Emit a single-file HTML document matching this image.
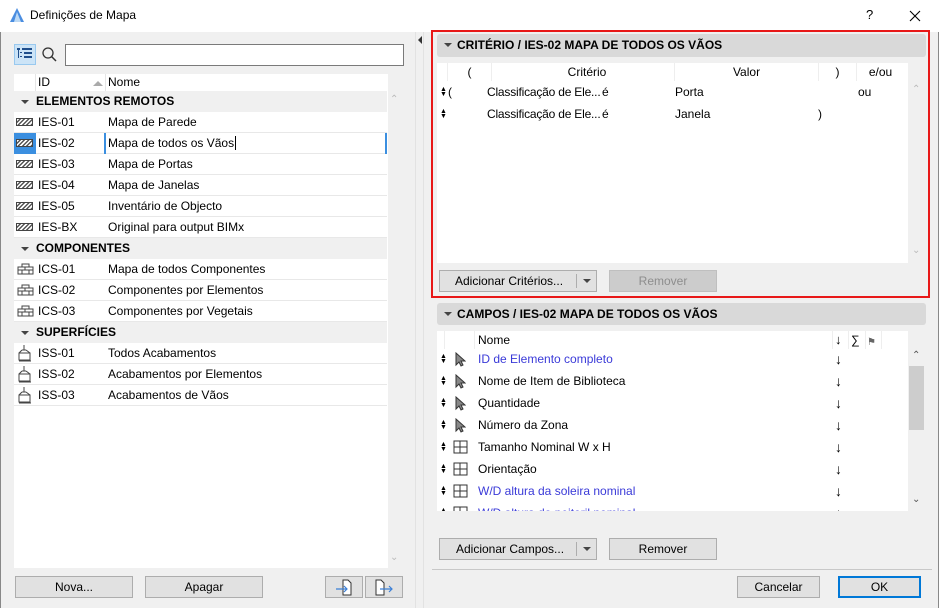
<!DOCTYPE html>
<html><head><meta charset="utf-8"><style>
*{box-sizing:border-box;margin:0;padding:0}
body{width:939px;height:608px;overflow:hidden;background:#f0f0f0;font:12px "Liberation Sans",sans-serif;color:#000;position:relative}
.a{position:absolute}
.btn{position:absolute;background:#e1e1e1;border:1px solid #adadad;text-align:center;line-height:20px;font-size:12px}
.hdr{position:absolute;background:#d9d9d9;border-radius:3px;font-weight:bold;font-size:12px;line-height:22px;padding-left:20px}
.tri{position:absolute;left:7px;top:9px;width:0;height:0;border-left:4px solid transparent;border-right:4px solid transparent;border-top:4px solid #444}
.row{position:absolute;left:14px;width:373px;height:21px;border-bottom:1px solid #e8e8e8;line-height:20px;background:#fff}
.grp{position:absolute;left:14px;width:373px;height:21px;background:#f0f0f0;font-weight:bold;line-height:21px;padding-left:22px}
.grp .tri{left:7px;top:9px}
.id{position:absolute;left:24px}
.nm{position:absolute;left:94px}
.ic{position:absolute;left:2px;top:6px;width:17px;height:8px;border:1px solid #444;background:repeating-linear-gradient(135deg,#fff 0 1.5px,#555 1.5px 3px)}
.fr{position:absolute;left:0;width:471px;height:22px;line-height:22px}
.ud{position:absolute;left:3px;font-size:7px;line-height:5px;top:6px}
.blue{color:#3a3ad8}
</style></head><body>
<!-- title bar -->
<div class="a" style="left:0;top:0;width:939px;height:32px;background:#fff"></div>
<svg class="a" style="left:9px;top:7px" width="16" height="16"><path d="M1 15 L8 1 L15 15 Z" fill="#4a8de0"/><path d="M5 15 L8 5 L12 15Z" fill="#bcd9f5"/></svg>
<div class="a" style="left:30px;top:8px;font-size:12px">Definições de Mapa</div>
<div class="a" style="left:866px;top:7px;font-size:13px">?</div>
<svg class="a" style="left:909px;top:10px" width="12" height="12"><path d="M1 1L11 11M11 1L1 11" stroke="#000" stroke-width="1.1"/></svg>
<div class="a" style="left:0;top:32px;width:1px;height:576px;background:#888"></div>
<div class="a" style="left:938px;top:32px;width:1px;height:576px;background:#888"></div>

<!-- left toolbar -->
<div class="a" style="left:14px;top:44px;width:22px;height:21px;background:#cce4f7;border:1px solid #99c9ef"></div>
<svg class="a" style="left:17px;top:47px" width="16" height="14"><g fill="#1f4e8c"><rect x="0" y="1" width="3" height="2"/><rect x="5" y="1" width="10" height="2"/><rect x="3" y="5" width="2" height="1"/><rect x="7" y="5" width="8" height="2"/><rect x="3" y="9" width="2" height="1"/><rect x="7" y="9" width="8" height="2"/><rect x="1" y="3" width="1" height="8"/></g></svg>
<svg class="a" style="left:41px;top:46px" width="16" height="16"><circle cx="7" cy="7" r="5" fill="none" stroke="#333" stroke-width="1.3"/><path d="M10.5 10.5 L15 15" stroke="#333" stroke-width="1.5"/></svg>
<div class="a" style="left:65px;top:44px;width:339px;height:22px;background:#fff;border:1px solid #7a7a7a"></div>

<!-- list -->
<div class="a" style="left:14px;top:74px;width:374px;height:494px;background:#fff"></div>
<div class="a" style="left:14px;top:74px;width:374px;height:17px;background:#fff;line-height:17px">
 <div class="a" style="left:21px;top:0;width:1px;height:17px;background:#e5e5e5"></div>
 <div class="a" style="left:24px">ID</div>
 <div class="a" style="left:79px;top:7px;width:0;height:0;border-left:5px solid transparent;border-right:5px solid transparent;border-bottom:5px solid #aaa"></div>
 <div class="a" style="left:91px;top:0;width:1px;height:17px;background:#e5e5e5"></div>
 <div class="a" style="left:94px">Nome</div>
</div>
<div class="grp" style="top:91px"><div class="tri"></div>ELEMENTOS REMOTOS</div>
<div class="row" style="top:112px"><div class="ic"></div><div class="id">IES-01</div><div class="nm">Mapa de Parede</div></div>
<div class="row" style="top:133px"><div class="a" style="left:0;top:0;width:22px;height:21px;background:#3b8fe0"></div><div class="ic"></div><div class="id">IES-02</div><div class="a" style="left:90px;top:0;width:283px;height:21px;border-left:2px solid #3b8fe0;border-right:2px solid #3b8fe0"></div><div class="nm">Mapa de todos os Vãos<span style="border-left:1px solid #000;margin-left:1px"></span></div></div>
<div class="row" style="top:154px"><div class="ic"></div><div class="id">IES-03</div><div class="nm">Mapa de Portas</div></div>
<div class="row" style="top:175px"><div class="ic"></div><div class="id">IES-04</div><div class="nm">Mapa de Janelas</div></div>
<div class="row" style="top:196px"><div class="ic"></div><div class="id">IES-05</div><div class="nm">Inventário de Objecto</div></div>
<div class="row" style="top:217px"><div class="ic"></div><div class="id">IES-BX</div><div class="nm">Original para output BIMx</div></div>
<div class="grp" style="top:238px"><div class="tri"></div>COMPONENTES</div>
<div class="row" style="top:259px"><svg class="a" style="left:3px;top:4px" width="17" height="12"><path d="M5 1H12V4H5ZM1 4H16V7H1ZM1 7H16V11H1ZM8 4V7M5 7V11M12 7V11" fill="none" stroke="#444"/></svg><div class="id">ICS-01</div><div class="nm">Mapa de todos Componentes</div></div>
<div class="row" style="top:280px"><svg class="a" style="left:3px;top:4px" width="17" height="12"><path d="M5 1H12V4H5ZM1 4H16V7H1ZM1 7H16V11H1ZM8 4V7M5 7V11M12 7V11" fill="none" stroke="#444"/></svg><div class="id">ICS-02</div><div class="nm">Componentes por Elementos</div></div>
<div class="row" style="top:301px"><svg class="a" style="left:3px;top:4px" width="17" height="12"><path d="M5 1H12V4H5ZM1 4H16V7H1ZM1 7H16V11H1ZM8 4V7M5 7V11M12 7V11" fill="none" stroke="#444"/></svg><div class="id">ICS-03</div><div class="nm">Componentes por Vegetais</div></div>
<div class="grp" style="top:322px"><div class="tri"></div>SUPERFÍCIES</div>
<div class="row" style="top:343px"><svg class="a" style="left:3px;top:1px" width="16" height="19"><path d="M7 1V6M5 6H9M2 9H13V16H2ZM2 9L5 6M13 9L9 6M2 17H14" fill="none" stroke="#444"/></svg><div class="id">ISS-01</div><div class="nm">Todos Acabamentos</div></div>
<div class="row" style="top:364px"><svg class="a" style="left:3px;top:1px" width="16" height="19"><path d="M7 1V6M5 6H9M2 9H13V16H2ZM2 9L5 6M13 9L9 6M2 17H14" fill="none" stroke="#444"/></svg><div class="id">ISS-02</div><div class="nm">Acabamentos por Elementos</div></div>
<div class="row" style="top:385px"><svg class="a" style="left:3px;top:1px" width="16" height="19"><path d="M7 1V6M5 6H9M2 9H13V16H2ZM2 9L5 6M13 9L9 6M2 17H14" fill="none" stroke="#444"/></svg><div class="id">ISS-03</div><div class="nm">Acabamentos de Vãos</div></div>
<div class="a" style="left:390px;top:94px;color:#bbb;font-size:10px">&#8963;</div>
<div class="a" style="left:390px;top:552px;color:#bbb;font-size:10px">&#8964;</div>

<div class="btn" style="left:15px;top:576px;width:118px;height:22px">Nova...</div>
<div class="btn" style="left:145px;top:576px;width:118px;height:22px">Apagar</div>
<div class="btn" style="left:325px;top:576px;width:38px;height:22px"><svg width="22" height="18" style="margin-top:1px"><path d="M10 2H15L18 5V17H10Z" fill="#fff" stroke="#333"/><path d="M3 11H14M11 8L14 11L11 14" fill="none" stroke="#3b7fd6" stroke-width="1.2"/></svg></div>
<div class="btn" style="left:365px;top:576px;width:38px;height:22px"><svg width="22" height="18" style="margin-top:1px"><path d="M3 2H8L11 5V17H3Z" fill="#fff" stroke="#333"/><path d="M7 11H19M16 8L19 11L16 14" fill="none" stroke="#3b7fd6" stroke-width="1.2"/></svg></div>

<!-- splitter -->
<div class="a" style="left:415px;top:32px;width:1px;height:576px;background:#e2e2e2"></div>
<div class="a" style="left:423px;top:32px;width:1px;height:576px;background:#e2e2e2"></div>
<div class="a" style="left:418px;top:36px;width:0;height:0;border-top:4px solid transparent;border-bottom:4px solid transparent;border-right:4px solid #333"></div>

<!-- criterio -->
<div class="a" style="left:431px;top:30px;width:499px;height:268px;border:2px solid #e81818"></div>
<div class="hdr" style="left:437px;top:34px;width:489px;height:23px"><div class="tri"></div>CRITÉRIO / IES-02 MAPA DE TODOS OS VÃOS</div>
<div class="a" style="left:437px;top:63px;width:471px;height:200px;background:#fff">
 <div class="a" style="left:0;top:0;width:471px;height:18px;line-height:18px;text-align:center">
  <div class="a" style="left:10px;width:1px;height:18px;background:#eee"></div>
  <div class="a" style="left:11px;width:43px">(</div>
  <div class="a" style="left:54px;width:1px;height:18px;background:#eee"></div>
  <div class="a" style="left:55px;width:190px">Critério</div>
  <div class="a" style="left:237px;width:1px;height:18px;background:#eee"></div>
  <div class="a" style="left:238px;width:143px">Valor</div>
  <div class="a" style="left:381px;width:1px;height:18px;background:#eee"></div>
  <div class="a" style="left:382px;width:37px">)</div>
  <div class="a" style="left:419px;width:1px;height:18px;background:#eee"></div>
  <div class="a" style="left:420px;width:47px">e/ou</div>
 </div>
 <div class="fr" style="top:18px"><span class="ud">▲<br>▼</span><span class="a" style="left:11px">(</span><span class="a" style="left:50px;letter-spacing:-0.2px">Classificação de Ele...</span><span class="a" style="left:165px">é</span><span class="a" style="left:238px">Porta</span><span class="a" style="left:421px">ou</span></div>
 <div class="fr" style="top:40px"><span class="ud">▲<br>▼</span><span class="a" style="left:50px;letter-spacing:-0.2px">Classificação de Ele...</span><span class="a" style="left:165px">é</span><span class="a" style="left:238px">Janela</span><span class="a" style="left:381px">)</span></div>
</div>
<div class="a" style="left:912px;top:84px;color:#bbb;font-size:10px">&#8963;</div>
<div class="a" style="left:912px;top:245px;color:#bbb;font-size:10px">&#8964;</div>
<div class="btn" style="left:439px;top:270px;width:158px;height:22px;text-align:left;padding-left:15px">Adicionar Critérios...<div class="a" style="left:136px;top:3px;width:1px;height:14px;background:#adadad"></div><div class="a" style="left:143px;top:8px;border-left:4px solid transparent;border-right:4px solid transparent;border-top:4px solid #444"></div></div>
<div class="btn" style="left:609px;top:270px;width:108px;height:22px;background:#cccccc;border-color:#bfbfbf;color:#8d8d8d">Remover</div>

<!-- campos -->
<div class="hdr" style="left:437px;top:303px;width:489px;height:22px"><div class="tri"></div>CAMPOS / IES-02 MAPA DE TODOS OS VÃOS</div>
<div class="a" style="left:437px;top:331px;width:471px;height:180px;background:#fff;overflow:hidden">
 <div class="a" style="left:0;top:0;width:471px;height:18px;line-height:18px">
  <div class="a" style="left:7px;width:1px;height:18px;background:#eee"></div>
  <div class="a" style="left:37px;width:1px;height:18px;background:#eee"></div>
  <div class="a" style="left:41px">Nome</div>
  <div class="a" style="left:395px;width:1px;height:18px;background:#eee"></div>
  <div class="a" style="left:398px;font-size:13px">↓</div>
  <div class="a" style="left:411px;width:1px;height:18px;background:#eee"></div>
  <div class="a" style="left:414px">∑</div>
  <div class="a" style="left:428px;width:1px;height:18px;background:#eee"></div>
  <div class="a" style="left:430px;top:3px;font-size:10px;color:#666">⚑</div>
  <div class="a" style="left:444px;width:1px;height:18px;background:#eee"></div>
 </div>
</div>
<div class="a" style="left:437px;top:349px;width:471px;height:162px;overflow:hidden">
 <div class="fr" style="top:-1px"><span class="ud">▲<br>▼</span><svg class="a" style="left:17px;top:4px" width="12" height="15"><path d="M2 1V13L5 10L7 14L9 13L7 9H11Z" fill="#888" stroke="#333"/></svg><span class="a blue" style="left:41px">ID de Elemento completo</span><span class="a" style="left:398px;font-size:14px">↓</span></div>
 <div class="fr" style="top:21px"><span class="ud">▲<br>▼</span><svg class="a" style="left:17px;top:4px" width="12" height="15"><path d="M2 1V13L5 10L7 14L9 13L7 9H11Z" fill="#888" stroke="#333"/></svg><span class="a" style="left:41px">Nome de Item de Biblioteca</span><span class="a" style="left:398px;font-size:14px">↓</span></div>
 <div class="fr" style="top:43px"><span class="ud">▲<br>▼</span><svg class="a" style="left:17px;top:4px" width="12" height="15"><path d="M2 1V13L5 10L7 14L9 13L7 9H11Z" fill="#888" stroke="#333"/></svg><span class="a" style="left:41px">Quantidade</span><span class="a" style="left:398px;font-size:14px">↓</span></div>
 <div class="fr" style="top:65px"><span class="ud">▲<br>▼</span><svg class="a" style="left:17px;top:4px" width="12" height="15"><path d="M2 1V13L5 10L7 14L9 13L7 9H11Z" fill="#888" stroke="#333"/></svg><span class="a" style="left:41px">Número da Zona</span><span class="a" style="left:398px;font-size:14px">↓</span></div>
 <div class="fr" style="top:87px"><span class="ud">▲<br>▼</span><svg class="a" style="left:16px;top:4px" width="15" height="14"><path d="M1 1H14V13H1ZM7 1V13M1 7H14" fill="none" stroke="#333"/></svg><span class="a" style="left:41px">Tamanho Nominal W x H</span><span class="a" style="left:398px;font-size:14px">↓</span></div>
 <div class="fr" style="top:109px"><span class="ud">▲<br>▼</span><svg class="a" style="left:16px;top:4px" width="15" height="14"><path d="M1 1H14V13H1ZM7 1V13M1 7H14" fill="none" stroke="#333"/></svg><span class="a" style="left:41px">Orientação</span><span class="a" style="left:398px;font-size:14px">↓</span></div>
 <div class="fr" style="top:131px"><span class="ud">▲<br>▼</span><svg class="a" style="left:16px;top:4px" width="15" height="14"><path d="M1 1H14V13H1ZM7 1V13M1 7H14" fill="none" stroke="#333"/></svg><span class="a blue" style="left:41px">W/D altura da soleira nominal</span><span class="a" style="left:398px;font-size:14px">↓</span></div>
 <div class="fr" style="top:153px"><span class="ud">▲<br>▼</span><svg class="a" style="left:16px;top:4px" width="15" height="14"><path d="M1 1H14V13H1ZM7 1V13M1 7H14" fill="none" stroke="#333"/></svg><span class="a blue" style="left:41px">W/D altura do peitoril nominal</span><span class="a" style="left:398px;font-size:14px">↓</span></div>
</div>
<div class="a" style="left:909px;top:366px;width:15px;height:64px;background:#cdcdcd"></div>
<div class="a" style="left:912px;top:350px;color:#555;font-size:10px">&#8963;</div>
<div class="a" style="left:912px;top:494px;color:#555;font-size:10px">&#8964;</div>
<div class="btn" style="left:439px;top:538px;width:158px;height:22px;text-align:left;padding-left:16px">Adicionar Campos...<div class="a" style="left:136px;top:3px;width:1px;height:14px;background:#adadad"></div><div class="a" style="left:143px;top:8px;border-left:4px solid transparent;border-right:4px solid transparent;border-top:4px solid #444"></div></div>
<div class="btn" style="left:609px;top:538px;width:108px;height:22px">Remover</div>

<div class="a" style="left:432px;top:569px;width:500px;height:1px;background:#c8c8c8"></div>
<div class="btn" style="left:737px;top:576px;width:83px;height:22px">Cancelar</div>
<div class="btn" style="left:838px;top:576px;width:83px;height:22px;border:2px solid #0078d7;line-height:18px">OK</div>
</body></html>
